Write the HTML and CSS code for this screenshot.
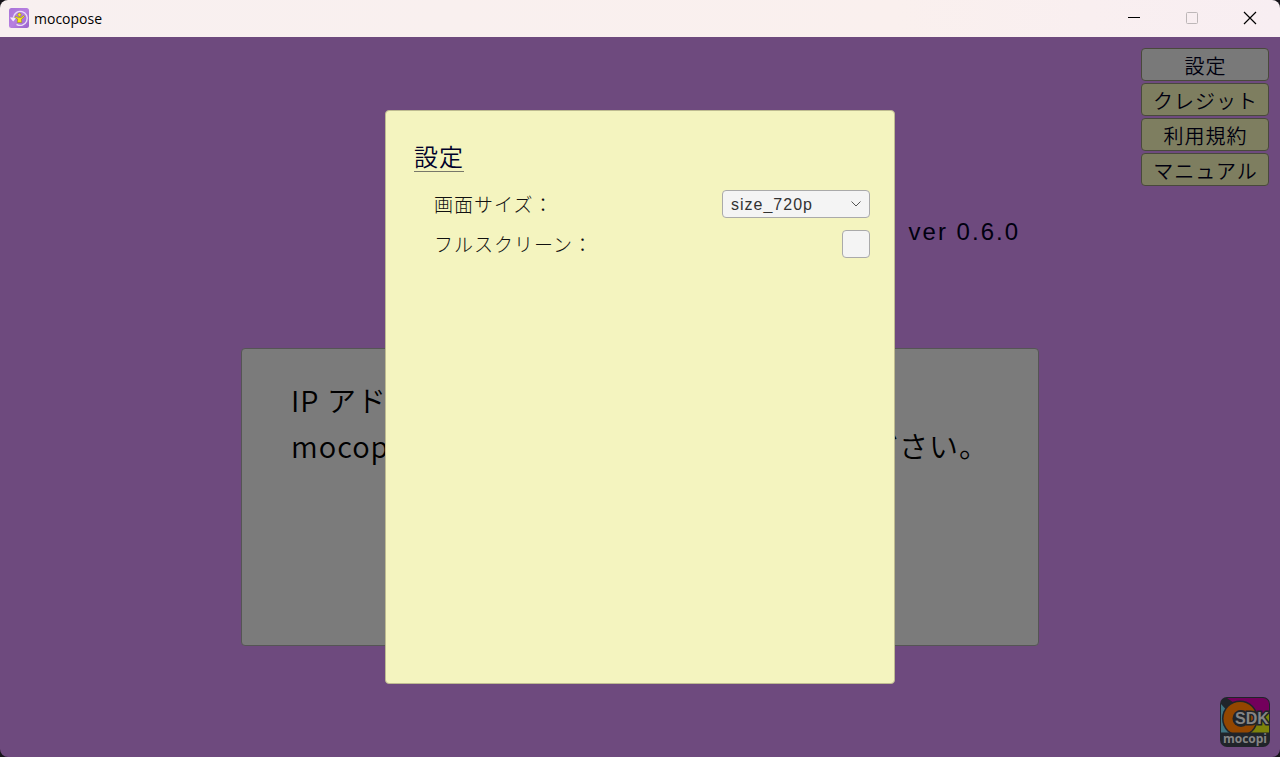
FILE: index.html
```html
<!DOCTYPE html>
<html lang="ja">
<head>
<meta charset="utf-8">
<title>mocopose</title>
<link rel="stylesheet" href="styles.css">
</head>
<body>
<div class="window">
  <header class="titlebar">
    <svg class="app-icon" viewBox="0 0 20 20" aria-hidden="true">
      <defs><linearGradient id="app" x1="0" y1="0" x2="1" y2="1"><stop offset="0" stop-color="#a874d8"/><stop offset=".5" stop-color="#b77fe0"/><stop offset="1" stop-color="#9a62cc"/></linearGradient></defs>
      <rect width="20" height="20" rx="2.5" fill="url(#app)"/>
      <path d="M4.300 9.500A7 7 0 1 1 7.500 16.300" fill="none" stroke="#eadcf6" stroke-width="1.4"/>
      <path d="M.8 9.500h6.800L4.200 13.500z" fill="#f3eafa"/>
      <circle cx="10.500" cy="6.800" r="1.700" fill="#f2e713" stroke="#8b7a28" stroke-width=".5"/>
      <path d="M6.500 8.300l2.500 1 3 .2 2.700-2 .8 1-3 2.700.2 3.300H8.300l.3-3.500-2.800-1.500z" fill="#f2e713" stroke="#8b7a28" stroke-width=".5"/>
    </svg>
    <span class="app-name">mocopose</span>
    <div class="window-controls">
      <button class="window-button" type="button" aria-label="最小化"><svg viewBox="0 0 14 14"><path d="M1 6.5h12" stroke="#000"/></svg></button>
      <button class="window-button" type="button" aria-label="最大化" disabled><svg viewBox="0 0 14 14"><rect x="1.5" y="1.5" width="11" height="11" rx="1" fill="none" stroke="#bdb7b8"/></svg></button>
      <button class="window-button" type="button" aria-label="閉じる"><svg viewBox="0 0 14 14"><path d="M1 1l12 12M13 1L1 13" stroke="#000" stroke-width="1.2"/></svg></button>
    </div>
  </header>
  <main class="stage">
    <nav class="menu">
      <button class="menu-button menu-button-current" type="button">設定</button>
      <button class="menu-button" type="button">クレジット</button>
      <button class="menu-button" type="button">利用規約</button>
      <button class="menu-button" type="button">マニュアル</button>
    </nav>
    <p class="version">ver 0.6.0</p>
    <section class="guide">
      <p class="guide-line">IP アド</p>
      <p class="guide-line"><span>mocopi</span><span>ださい。</span></p>
    </section>
    <svg class="sdk-logo" viewBox="0 0 50 50" role="img" aria-label="mocopi SDK">
      <defs><clipPath id="logo"><rect x="1" y="1" width="48" height="48" rx="6"/></clipPath></defs>
      <rect width="50" height="50" rx="7" fill="#20242a"/>
      <g clip-path="url(#logo)">
        <path d="M1 7l9 10v19H1z" fill="#3f7480"/>
        <path d="M7 1h42v16H30z" fill="#73005c"/>
        <path d="M30 17h19v19H30z" fill="#7d830b"/>
        <circle cx="20" cy="21.500" r="18" fill="#20242a"/>
        <circle cx="20" cy="21.500" r="16.500" fill="#934600"/>
        <circle cx="21" cy="21.500" r="8.500" fill="#20242a"/>
        <path d="M1 35.500h48V49H1z" fill="#20242a"/>
      </g>
      <text class="logo-sdk" x="32" y="27" text-anchor="middle">SDK</text>
      <text class="logo-name" x="25" y="46" text-anchor="middle">mocopi</text>
    </svg>
    <section class="dialog" role="dialog" aria-labelledby="dialog-title">
      <h1 class="dialog-title" id="dialog-title">設定</h1>
      <form class="settings">
        <div class="setting">
          <label for="size">画面サイズ：</label>
          <div class="select-box">
            <select class="select" id="size"><option>size_720p</option></select>
            <svg class="chevron" viewBox="0 0 10 6" aria-hidden="true"><path d="M.5.5L5 5 9.500.5" fill="none" stroke="#555"/></svg>
          </div>
        </div>
        <div class="setting">
          <label for="full">フルスクリーン：</label>
          <input class="checkbox" id="full" type="checkbox">
        </div>
      </form>
    </section>
  </main>
</div>
</body>
</html>
```
FILE: styles.css
```css
* { box-sizing: border-box; }
body {
  margin: 0;
  background: #17151a;
  color: #00000f;
  font-family: "Noto Sans CJK JP", sans-serif;
}
button, select { font: inherit; color: inherit; }
p, h1 { margin: 0; }
.window {
  display: flex;
  flex-direction: column;
  min-height: 100vh;
  border-radius: 8px;
  overflow: hidden;
}
.titlebar {
  display: flex;
  align-items: center;
  height: 37px;
  padding: 0 1px 1px 9px;
  background: linear-gradient(90deg, #f8f0f0, #faf0ee 70%, #f8eef2);
  color: #000;
}
.app-icon { width: 20px; height: 20px; margin-right: 5px; }
.app-name { font: 14px "Open Sans", "Noto Sans", sans-serif; }
.window-controls { display: flex; align-self: stretch; margin-left: auto; }
.window-button {
  display: grid;
  place-items: center;
  width: 58px;
  padding: 0;
  border: 0;
  background: none;
}
.window-button svg { width: 14px; height: 14px; }
.stage {
  position: relative;
  flex: 1;
  display: flex;
  flex-direction: column;
  background: #6e4a7e;
  padding: 11px 10px 10px;
}
.menu {
  display: flex;
  flex-direction: column;
  align-self: flex-end;
  gap: 2px;
  width: 128px;
  margin-right: 1px;
}
.menu-button {
  height: 33px;
  padding: 2px 0 0 1px;
  border: 1px solid #49493c;
  border-radius: 4px;
  background: #7e7e60;
  font-size: 20px;
  font-weight: 350;
  line-height: 30px;
  letter-spacing: 1px;
}
.menu-button-current { background: #797979; }
.version {
  align-self: flex-end;
  margin: 32px 250px 0 0;
  font-family: "Liberation Sans", Arial, sans-serif;
  font-size: 24px;
  line-height: 28px;
  letter-spacing: 2px;
}
.guide {
  align-self: center;
  width: 798px;
  max-width: 100%;
  min-height: 298px;
  margin-top: 102px;
  padding: 27px 49px;
  border: 1px solid #555;
  border-radius: 4px;
  background: #7b7b7b;
  color: #000;
}
.guide-line {
  display: flex;
  justify-content: space-between;
  font-size: 29px;
  font-weight: 350;
  line-height: 46px;
  letter-spacing: 1px;
}
.sdk-logo { width: 50px; height: 50px; margin-top: auto; align-self: flex-end; }
.logo-sdk {
  font: bold 16px "Liberation Sans", Arial, sans-serif;
  fill: #858585;
  stroke: #20242a;
  stroke-width: 3px;
  paint-order: stroke;
}
.logo-name { font: bold 12px "Open Sans", "Noto Sans", sans-serif; fill: #858585; }
.dialog {
  position: absolute;
  inset: 0;
  margin: auto;
  width: 510px;
  max-width: 100%;
  height: 574px;
  padding: 30px 24px 30px 28px;
  border: 1px solid #bebb91;
  border-radius: 4px;
  background: #f4f4bf;
}
.dialog-title {
  width: max-content;
  border-bottom: 1px solid #77776a;
  color: #00002a;
  font-size: 24px;
  font-weight: 350;
  line-height: 30px;
  letter-spacing: 1px;
}
.settings {
  display: flex;
  flex-direction: column;
  gap: 12px;
  margin-top: 18px;
  padding-left: 20px;
}
.setting {
  display: flex;
  align-items: center;
  justify-content: space-between;
  height: 28px;
  color: #111;
  font-size: 19px;
  font-weight: 300;
  line-height: 26px;
  letter-spacing: 1px;
}
.select-box { position: relative; width: 148px; height: 28px; }
.select {
  display: block;
  appearance: none;
  width: 100%;
  height: 100%;
  padding: 0 24px 0 8px;
  border: 1px solid #aaa;
  border-radius: 4px;
  background: #f4f4f4;
  color: #323232;
  font: 16px "Liberation Sans", Arial, sans-serif;
  letter-spacing: 1px;
}
.chevron {
  position: absolute;
  top: 11px;
  right: 9px;
  width: 10px;
  height: 6px;
  pointer-events: none;
}
.checkbox {
  appearance: none;
  width: 28px;
  height: 28px;
  margin: 0;
  border: 1px solid #aaa;
  border-radius: 4px;
  background: #f4f4f4;
}
```
